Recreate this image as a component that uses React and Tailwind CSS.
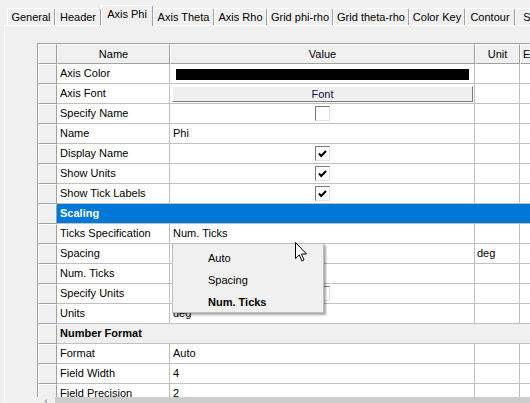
import React from 'react';

const tabs = [
  { label: 'General', w: 48 },
  { label: 'Header', w: 46 },
  { label: 'Axis Phi', w: 52, active: true },
  { label: 'Axis Theta', w: 61 },
  { label: 'Axis Rho', w: 53 },
  { label: 'Grid phi-rho', w: 66 },
  { label: 'Grid theta-rho', w: 76 },
  { label: 'Color Key', w: 56 },
  { label: 'Contour', w: 50 },
  { label: 'Su', w: 30 },
];

const rows = [
  { name: 'Axis Color', kind: 'color' },
  { name: 'Axis Font', kind: 'button' },
  { name: 'Specify Name', kind: 'check', checked: false },
  { name: 'Name', kind: 'text', value: 'Phi' },
  { name: 'Display Name', kind: 'check', checked: true },
  { name: 'Show Units', kind: 'check', checked: true },
  { name: 'Show Tick Labels', kind: 'check', checked: true },
  { name: 'Scaling', kind: 'blue' },
  { name: 'Ticks Specification', kind: 'text', value: 'Num. Ticks' },
  { name: 'Spacing', kind: 'text', value: '', unit: 'deg' },
  { name: 'Num. Ticks', kind: 'text', value: '' },
  { name: 'Specify Units', kind: 'check', checked: false },
  { name: 'Units', kind: 'text', value: 'deg' },
  { name: 'Number Format', kind: 'gray' },
  { name: 'Format', kind: 'text', value: 'Auto' },
  { name: 'Field Width', kind: 'text', value: '4' },
  { name: 'Field Precision', kind: 'text', value: '2' },
];

function Checkbox({ checked }) {
  return (
    <div className="w-[15px] h-[15px] bg-white border-t border-l border-[#7a7a7a] border-r border-b border-r-[#e3e3e3] border-b-[#e3e3e3] flex items-center justify-center">
      {checked && (
        <svg width="9" height="8" viewBox="0 0 9 8">
          <path d="M1 3.5 L3.2 6 L8 1" stroke="#000" strokeWidth="2" fill="none" />
        </svg>
      )}
    </div>
  );
}

function RowHead() {
  return (
    <div className="w-[19px] shrink-0 h-full bg-[#f0f0f0] border-t border-l border-white border-r border-b border-r-[#a0a0a0] border-b-[#a0a0a0]" />
  );
}

function Row({ row }) {
  if (row.kind === 'blue' || row.kind === 'gray') {
    return (
      <div className="flex h-[20px]">
        <RowHead />
        <div
          className={
            row.kind === 'blue'
              ? 'flex-1 bg-[#0078d7] text-white font-bold pl-[3px] flex items-center border-b border-[#c0c0c0]'
              : 'flex-1 bg-[#f0f0f0] text-black font-bold pl-[3px] flex items-center border-b border-[#c0c0c0]'
          }
        >
          {row.name}
        </div>
      </div>
    );
  }

  let value = null;
  if (row.kind === 'color') {
    value = <div className="ml-[6px] mr-[5px] mt-[5px] h-[11px] bg-black" />;
  } else if (row.kind === 'button') {
    value = (
      <div className="ml-[2px] mr-[1px] mt-[2px] h-[16px] bg-[#efefef] border-t border-l border-white border-r border-b border-r-[#7a7a7a] border-b-[#7a7a7a] flex items-center justify-center text-[#101040]">
        Font
      </div>
    );
  } else if (row.kind === 'check') {
    value = (
      <div className="flex justify-center pt-[2px]">
        <Checkbox checked={row.checked} />
      </div>
    );
  } else {
    value = <div className="pl-[3px] h-full flex items-center">{row.value}</div>;
  }

  return (
    <div className="flex h-[20px]">
      <RowHead />
      <div className="w-[113px] shrink-0 h-full border-r border-b border-[#c0c0c0] bg-white pl-[3px] flex items-center">
        {row.name}
      </div>
      <div className="w-[305px] shrink-0 h-full border-r border-b border-[#c0c0c0] bg-white">{value}</div>
      <div className="w-[45px] shrink-0 h-full border-r border-b border-[#c0c0c0] bg-white pl-[2px] flex items-center">
        {row.unit}
      </div>
      <div className="w-[60px] shrink-0 h-full border-r border-b border-[#c0c0c0] bg-white" />
    </div>
  );
}

function HeaderCell({ w, children }) {
  return (
    <div
      className={`${w} shrink-0 h-full bg-[#f0f0f0] border-t border-l border-white border-r border-b border-r-[#a0a0a0] border-b-[#a0a0a0] flex items-center justify-center`}
    >
      {children}
    </div>
  );
}

export default function App() {
  return (
    <div className="relative w-[530px] h-[403px] overflow-hidden bg-[#f0f0f0] text-[11px] text-black font-['Liberation_Sans',Arial,sans-serif]">
      {/* Tabs */}
      <div className="flex items-end h-[26px] pl-[7px] pt-[5px]">
        {tabs.map(t => (
          <div
            key={t.label}
            style={{ width: t.w }}
            className={
              t.active
                ? 'shrink-0 h-[21px] bg-[#f0f0f0] border-t border-l border-white border-r border-r-[#a0a0a0] rounded-t-[2px] flex items-center justify-center relative z-10 pb-[3px]'
                : 'shrink-0 h-[17px] mb-[1px] bg-[#f0f0f0] border-t border-l border-white border-r border-r-[#a0a0a0] rounded-t-[2px] flex items-center justify-center whitespace-nowrap overflow-hidden'
            }
          >
            <span className="whitespace-nowrap">{t.label}</span>
          </div>
        ))}
      </div>

      {/* Panel */}
      <div className="ml-[4px] -mt-[1px] border-t border-l border-white h-[380px] pl-[32px] pt-[17px]">
        <div className="border-t border-l border-[#a0a0a0] w-[600px] h-[354px] overflow-hidden">
          <div className="flex h-[20px]">
            <HeaderCell w="w-[19px]" />
            <HeaderCell w="w-[113px]">Name</HeaderCell>
            <HeaderCell w="w-[305px]">Value</HeaderCell>
            <HeaderCell w="w-[45px]">Unit</HeaderCell>
            <div className="w-[60px] shrink-0 h-full bg-[#f0f0f0] border-t border-l border-white border-r border-b border-r-[#a0a0a0] border-b-[#a0a0a0] pl-[2px] flex items-center">
              E
            </div>
          </div>
          {rows.map(r => (
            <Row key={r.name} row={r} />
          ))}
        </div>
        {/* horizontal scrollbar */}
        <div className="flex h-[8px] w-[600px]">
          <div className="w-[18px] h-full bg-[#f0f0f0] flex items-start justify-center text-[#606060] leading-none text-[9px]">‹</div>
          <div className="flex-1 h-full bg-[#cdcdcd]" />
        </div>
      </div>

      {/* Dropdown popup */}
      <div className="absolute left-[172px] top-[243px] w-[152px] h-[70px] bg-[#f0f0f0] border border-[#bdbdbd] shadow-[2px_2px_2px_rgba(0,0,0,0.35)] pt-[3px]">
        <div className="h-[22px] pl-[35px] flex items-center">Auto</div>
        <div className="h-[22px] pl-[35px] flex items-center">Spacing</div>
        <div className="h-[22px] pl-[35px] flex items-center font-bold">Num. Ticks</div>
      </div>

      {/* Mouse cursor */}
      <svg className="absolute left-[295px] top-[242px]" width="13" height="21" viewBox="0 0 13 21">
        <path d="M0.5 0.5 L0.5 16.5 L4.3 12.8 L6.8 18.8 L9 17.9 L6.5 12 L11.5 12 Z" fill="#fff" stroke="#000" strokeWidth="1" />
      </svg>
    </div>
  );
}
